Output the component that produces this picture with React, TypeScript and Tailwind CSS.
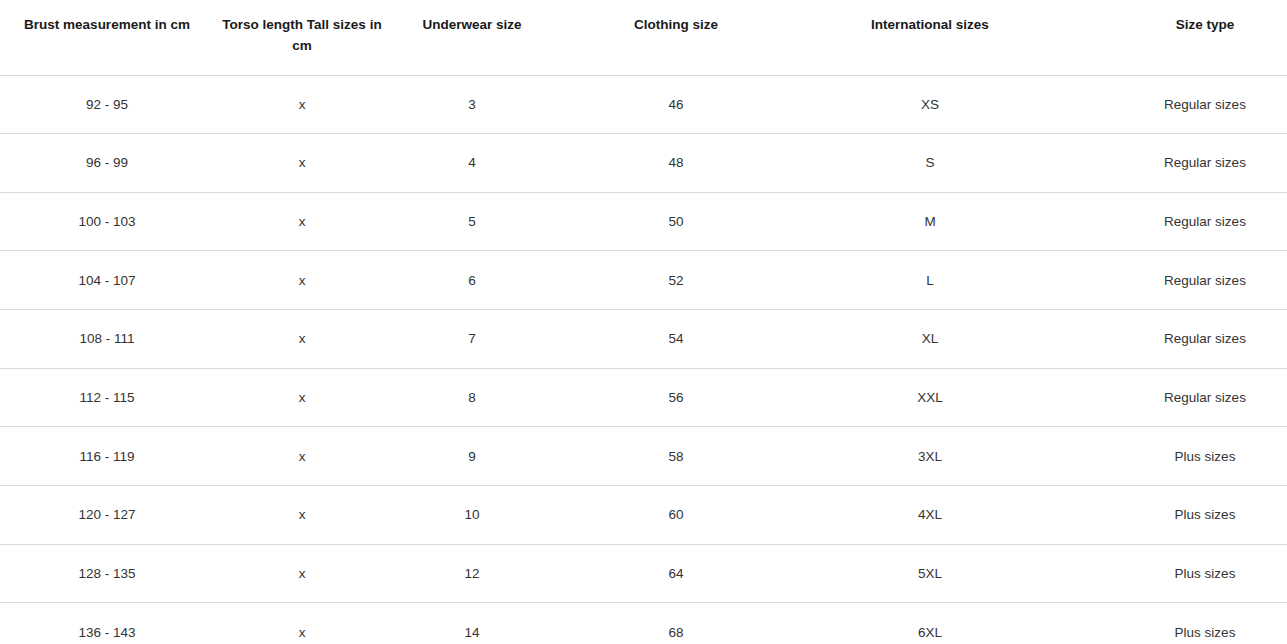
const headers = [
  'Brust measurement in cm',
  'Torso length Tall sizes in cm',
  'Underwear size',
  'Clothing size',
  'International sizes',
  'Size type',
];

const widths = ['w-[214px]', 'w-[176px]', 'w-[164px]', 'w-[244px]', 'w-[264px]', 'w-[286px]'];

const rows: string[][] = [
  ['92 - 95', 'x', '3', '46', 'XS', 'Regular sizes'],
  ['96 - 99', 'x', '4', '48', 'S', 'Regular sizes'],
  ['100 - 103', 'x', '5', '50', 'M', 'Regular sizes'],
  ['104 - 107', 'x', '6', '52', 'L', 'Regular sizes'],
  ['108 - 111', 'x', '7', '54', 'XL', 'Regular sizes'],
  ['112 - 115', 'x', '8', '56', 'XXL', 'Regular sizes'],
  ['116 - 119', 'x', '9', '58', '3XL', 'Plus sizes'],
  ['120 - 127', 'x', '10', '60', '4XL', 'Plus sizes'],
  ['128 - 135', 'x', '12', '64', '5XL', 'Plus sizes'],
  ['136 - 143', 'x', '14', '68', '6XL', 'Plus sizes'],
];

export default function App() {
  return (
    <div className="w-full h-[644px] overflow-hidden bg-white font-['Liberation_Sans',sans-serif] text-[13.5px] text-[#333]">
      <table className="w-[1348px] table-fixed border-collapse">
        <colgroup>
          {widths.map((w, i) => (
            <col key={i} className={w} />
          ))}
        </colgroup>
        <thead>
          <tr className="border-b border-[#d9d9d9]">
            {headers.map(h => (
              <th key={h} className="h-[75px] align-top px-2 pt-[14px] text-center font-bold leading-[21px] text-[#1a1a1a]">
                {h}
              </th>
            ))}
          </tr>
        </thead>
        <tbody>
          {rows.map((r, i) => (
            <tr key={i} className="border-b border-[#d9d9d9]">
              {r.map((c, j) => (
                <td key={j} className="h-[58.67px] px-2 pt-[1px] text-center align-middle">
                  {c}
                </td>
              ))}
            </tr>
          ))}
        </tbody>
      </table>
    </div>
  );
}
